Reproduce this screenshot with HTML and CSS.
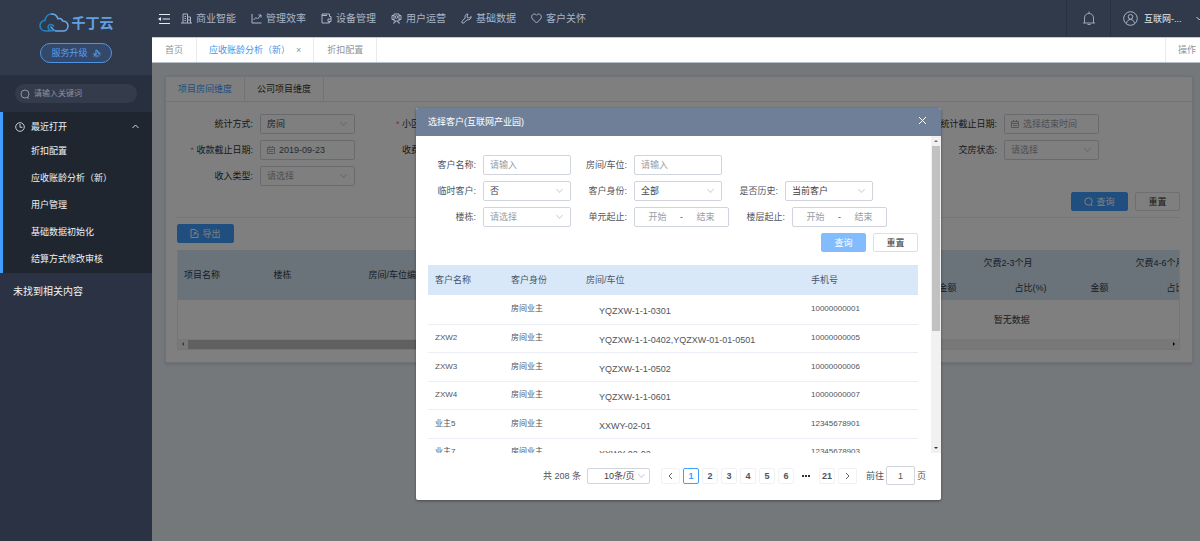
FILE: index.html
```
<!DOCTYPE html>
<html lang="zh-CN">
<head>
    <meta charset="UTF-8">
    <meta name="viewport" content="width=device-width, initial-scale=1.0">
    <title>千丁云</title>
    <link rel="stylesheet" href="styles.css">
</head>
<body>

    <div class="app">
        <aside class="sidebar">
            <div class="brand">
                <div class="logo">
                    <svg width="30" height="20" viewBox="0 0 30 20" fill="none" stroke-width="1.6" stroke-linecap="round">
                        <path stroke="#2385c4" d="M11 18H7C3.500 18 1 15.700 1 12.700 1 9.800 3.300 7.500 6 7.500 6.500 3.500 9.300 1 12.500 1"/>
                        <path stroke="#6aa6e8" d="M12.500 1C15.700 1 18 2.800 19 5.800 21 5.200 23 6 23.700 8 27 8.200 29 10.200 29 13 29 16 26.700 18 24 18H17C14.500 18 13.500 15.500 12 14"/>
                        <path stroke="#2385c4" d="M15 17.500C11 18.500 8.500 16 9.200 13.300 10 11 13.500 10.800 14.500 13"/>
                    </svg>
                    <span>千丁云</span>
                </div>
                <button class="upgrade">服务升级
                    <svg width="9" height="9" viewBox="0 0 9 9" fill="none" stroke="#559ef0"><path d="M4 8.500V5H1M4 5L1.500 7.500M4 5V1L6 2M6 2V4H8.500M6 4L8.500 6M6 6V8"/></svg>
                </button>
            </div>
            <div class="search">
                <label class="search-box">
                    <svg width="10" height="10" viewBox="0 0 10 10" fill="none" stroke="#8b94a5"><circle cx="5" cy="5" r="4"/><path d="M7 8.500L9 9.500"/></svg>
                    <input type="text" placeholder="请输入关键词" aria-label="请输入关键词">
                </label>
            </div>
            <nav class="recent">
                <button class="recent-title">
                    <svg width="10" height="10" viewBox="0 0 10 10" fill="none" stroke="#c8ced8"><circle cx="5" cy="5" r="4.300"/><path d="M5 2V5.300H7.500"/></svg>
                    <span>最近打开</span>
                    <svg width="7" height="5" viewBox="0 0 7 5" fill="none" stroke="#d5dae2"><path d="M.5 4L3.500 1L6.500 4"/></svg>
                </button>
                <a href="#">折扣配置</a>
                <a href="#">应收账龄分析（新）</a>
                <a href="#">用户管理</a>
                <a href="#">基础数据初始化</a>
                <a href="#">结算方式修改审核</a>
            </nav>
            <p class="no-result">未找到相关内容</p>
        </aside>

        <div class="main">
            <header class="header">
                <button class="fold" aria-label="menu">
                    <svg width="13" height="12" viewBox="0 0 13 12" fill="none" stroke="#e4e8ef"><path d="M1 1.500H12M4.500 6H12M1 10.500H12"/><path fill="#e4e8ef" stroke="none" d="M0 6L3 4V8Z"/></svg>
                </button>
                <nav class="top-nav">
                    <a href="#">
                        <svg width="11" height="11" viewBox="0 0 11 11"><path d="M2 10V1H6.500V10M6.500 4H9.500V10M0 10H11M3.500 3.500H5M3.500 5.500H5M3.500 7.500H5M8 6V8"/></svg>
                        商业智能
                    </a>
                    <a href="#">
                        <svg width="11" height="11" viewBox="0 0 11 11"><path d="M1 1V10H10.500M2.500 7L5 4.500L6.500 6L10 2M7.500 2H10V4.500"/></svg>
                        管理效率
                    </a>
                    <a href="#">
                        <svg width="11" height="11" viewBox="0 0 11 11"><path d="M8.500 3.500V1H1V10H8.500V8.500M1 2.500H6M8.500 3.500H10V8.500H7V6H10"/></svg>
                        设备管理
                    </a>
                    <a href="#">
                        <svg width="11" height="11" viewBox="0 0 11 11"><path d="M3 1H8V8H3ZM3 2.500H1V6.500H3M8 2.500H10V6.500H8M2 10H3.500L4.500 8M9 10H7.500L6.500 8"/><circle cx="5.500" cy="4" r="1.300"/></svg>
                        用户运营
                    </a>
                    <a href="#">
                        <svg width="11" height="11" viewBox="0 0 11 11"><path d="M7 1C4.500 1 3.500 3 4.200 5L1 8.300V10H2.800L6 6.800C8 7.500 10.300 6 10.200 3.500L8.200 5L6.300 4.700L6 3Z"/></svg>
                        基础数据
                    </a>
                    <a href="#">
                        <svg width="11" height="11" viewBox="0 0 11 11"><path d="M5.500 10L1.500 6C-.5 3.500 1.500 1 3.300 1 4.300 1 5 1.500 5.500 2.300 6 1.500 6.700 1 7.700 1 9.500 1 11.500 3.500 9.500 6Z"/></svg>
                        客户关怀
                    </a>
                </nav>
                <button class="bell" aria-label="notice">
                    <svg width="14" height="15" viewBox="0 0 14 15" fill="none" stroke="#9aa4b5"><path d="M1 12H13M2.500 12V7C2.500 4 4.500 2.500 7 2.500S11.500 4 11.500 7V12M7 .5V2.500M5.500 13.500H8.500"/></svg>
                </button>
                <button class="user">
                    <svg width="15" height="15" viewBox="0 0 15 15" fill="none" stroke="#a9b2c1"><circle cx="7.500" cy="7.500" r="6.800"/><circle cx="7.500" cy="5.800" r="2.300"/><path d="M3.500 12.500C4 9.500 5.500 8.500 7.500 8.500S11 9.500 11.500 12.500"/></svg>
                    <span>互联网-...</span>
                    <svg width="7" height="5" viewBox="0 0 7 5" fill="none" stroke="#d5dae2"><path d="M.5 1L3.500 4L6.500 1"/></svg>
                </button>
            </header>

            <nav class="page-tabs">
                <a href="#">首页</a>
                <a href="#" class="active">应收账龄分析（新）<span class="close">×</span></a>
                <a href="#" class="last">折扣配置</a>
                <a href="#" class="operate">操作</a>
            </nav>

            <main class="content">
                <section class="card">
                    <div class="card-tabs">
                        <button class="active">项目房间维度</button>
                        <button>公司项目维度</button>
                    </div>
                    <div class="card-body">
                        <form class="filter">
                            <div class="item">
                                <label for="mode">统计方式:</label>
                                <div class="select"><select id="mode"><option>房间</option></select></div>
                            </div>
                            <div class="item required">
                                <span class="label short">小区</span>
                            </div>
                            <div class="item fifth">
                                <label for="endDate">统计截止日期:</label>
                                <div class="date">
                                    <svg width="8" height="8" viewBox="0 0 8 8"><path d="M.5 1.500H7.500V7.500H.5ZM.5 3.500H7.500M2.500 0V2M5.500 0V2M2 5.500H6"/></svg>
                                    <input type="text" id="endDate" placeholder="选择结束时间">
                                </div>
                            </div>
                            <div class="item required">
                                <label for="payDate">收款截止日期:</label>
                                <div class="date">
                                    <svg width="8" height="8" viewBox="0 0 8 8"><path d="M.5 1.500H7.500V7.500H.5ZM.5 3.500H7.500M2.500 0V2M5.500 0V2M2 5.500H6"/></svg>
                                    <input type="text" id="payDate" value="2019-09-23">
                                </div>
                            </div>
                            <div class="item">
                                <span class="label short">收费</span>
                            </div>
                            <div class="item fifth">
                                <label for="state">交房状态:</label>
                                <div class="select empty"><select id="state"><option>请选择</option></select></div>
                            </div>
                            <div class="item">
                                <label for="income">收入类型:</label>
                                <div class="select empty"><select id="income"><option>请选择</option></select></div>
                            </div>
                        </form>
                        <div class="buttons">
                            <button class="btn primary wide">
                                <svg width="9" height="9" viewBox="0 0 9 9" fill="none" stroke="#fff"><circle cx="4.500" cy="4.500" r="3.700"/><path d="M6 7.500L8.500 8.500"/></svg>
                                查询
                            </button>
                            <button class="btn">重置</button>
                        </div>
                        <div class="export">
                            <button class="btn primary wide">
                                <svg width="9" height="9" viewBox="0 0 9 9" fill="none" stroke="#fff"><path d="M5 .5H1V8.500H8V4M5 .5L8 3M3 6.500L6 3.500M4 3.500H6V5.500"/></svg>
                                导出
                            </button>
                        </div>
                        <div class="report">
                            <table>
                                <colgroup>
                                    <col class="w89"><col class="w95"><col class="w114"><col class="w456">
                                    <col class="w76"><col class="w76"><col class="w76"><col class="w76"><col>
                                </colgroup>
                                <thead>
                                    <tr>
                                        <th rowspan="2">项目名称</th>
                                        <th rowspan="2">楼栋</th>
                                        <th rowspan="2">房间/车位编号</th>
                                        <th rowspan="2"></th>
                                        <th colspan="2" class="group">欠费2-3个月</th>
                                        <th colspan="2" class="group">欠费4-6个月</th>
                                        <th rowspan="2"></th>
                                    </tr>
                                    <tr>
                                        <th>金额</th>
                                        <th>占比(%)</th>
                                        <th>金额</th>
                                        <th>占比(%)</th>
                                    </tr>
                                </thead>
                                <tbody>
                                    <tr><td colspan="9">暂无数据</td></tr>
                                </tbody>
                            </table>
                            <div class="hbar">
                                <span class="arrow left"></span>
                                <div class="track"><div class="thumb"></div></div>
                                <span class="arrow right"></span>
                            </div>
                        </div>
                    </div>
                </section>

                <div class="mask">
                    <div class="dialog" role="dialog" aria-labelledby="dialogTitle">
                        <div class="dialog-header">
                            <h2 id="dialogTitle">选择客户(互联网产业园)</h2>
                            <button aria-label="close">
                                <svg width="9" height="9" viewBox="0 0 9 9" fill="none" stroke="#fff"><path d="M1 1L8 8M8 1L1 8"/></svg>
                            </button>
                        </div>
                        <div class="dialog-body">
                            <div class="dialog-content">
                                <form class="query">
                                    <div class="row">
                                        <div class="field">
                                            <label for="name">客户名称:</label>
                                            <input type="text" id="name" placeholder="请输入">
                                        </div>
                                        <div class="field">
                                            <label for="room">房间/车位:</label>
                                            <input type="text" id="room" placeholder="请输入">
                                        </div>
                                    </div>
                                    <div class="row">
                                        <div class="field">
                                            <label for="temp">临时客户:</label>
                                            <div class="select"><select id="temp"><option>否</option></select></div>
                                        </div>
                                        <div class="field">
                                            <label for="identity">客户身份:</label>
                                            <div class="select"><select id="identity"><option>全部</option></select></div>
                                        </div>
                                        <div class="field">
                                            <label for="history">是否历史:</label>
                                            <div class="select"><select id="history"><option>当前客户</option></select></div>
                                        </div>
                                    </div>
                                    <div class="row">
                                        <div class="field">
                                            <label for="building">楼栋:</label>
                                            <div class="select empty"><select id="building"><option>请选择</option></select></div>
                                        </div>
                                        <div class="field">
                                            <label for="unit">单元起止:</label>
                                            <div class="range">
                                                <input type="text" id="unit" placeholder="开始"><span>-</span><input type="text" placeholder="结束" aria-label="单元结束">
                                            </div>
                                        </div>
                                        <div class="field">
                                            <label for="floor">楼层起止:</label>
                                            <div class="range">
                                                <input type="text" id="floor" placeholder="开始"><span>-</span><input type="text" placeholder="结束" aria-label="楼层结束">
                                            </div>
                                        </div>
                                    </div>
                                    <div class="buttons">
                                        <button type="button" class="btn light">查询</button>
                                        <button type="button" class="btn">重置</button>
                                    </div>
                                </form>
                                <table class="customers">
                                    <colgroup><col class="w76"><col class="w75"><col><col class="w114"></colgroup>
                                    <thead>
                                        <tr>
                                            <th>客户名称</th>
                                            <th>客户身份</th>
                                            <th>房间/车位</th>
                                            <th>手机号</th>
                                        </tr>
                                    </thead>
                                    <tbody>
                                        <tr><td></td><td>房间业主</td><td class="room">YQZXW-1-1-0301</td><td>10000000001</td></tr>
                                        <tr><td>ZXW2</td><td>房间业主</td><td class="room">YQZXW-1-1-0402,YQZXW-01-01-0501</td><td>10000000005</td></tr>
                                        <tr><td>ZXW3</td><td>房间业主</td><td class="room">YQZXW-1-1-0502</td><td>10000000006</td></tr>
                                        <tr><td>ZXW4</td><td>房间业主</td><td class="room">YQZXW-1-1-0601</td><td>10000000007</td></tr>
                                        <tr><td>业主5</td><td>房间业主</td><td class="room">XXWY-02-01</td><td>12345678901</td></tr>
                                        <tr><td>业主7</td><td>房间业主</td><td class="room">XXWY-02-02</td><td>12345678903</td></tr>
                                    </tbody>
                                </table>
                            </div>
                            <div class="vbar">
                                <span class="arrow up"></span>
                                <div class="track"><div class="thumb"></div></div>
                                <span class="arrow down"></span>
                            </div>
                        </div>
                        <div class="pagination">
                            <span class="total">共 208 条</span>
                            <div class="select size"><select aria-label="每页条数"><option>10条/页</option></select></div>
                            <div class="pages">
                                <button class="step" aria-label="prev"><svg width="5" height="8" viewBox="0 0 5 8" fill="none" stroke="#606266"><path d="M4 1L1 4L4 7"/></svg></button>
                                <button class="active">1</button>
                                <button>2</button>
                                <button>3</button>
                                <button>4</button>
                                <button>5</button>
                                <button>6</button>
                                <button class="more" aria-label="more"><svg width="8" height="2" viewBox="0 0 8 2" fill="#303133"><path d="M0 0H2V2H0ZM3 0H5V2H3ZM6 0H8V2H6Z"/></svg></button>
                                <button>21</button>
                                <button class="step" aria-label="next"><svg width="5" height="8" viewBox="0 0 5 8" fill="none" stroke="#606266"><path d="M1 1L4 4L1 7"/></svg></button>
                            </div>
                            <label class="jump">前往<input type="text" value="1">页</label>
                        </div>
                    </div>
                </div>
            </main>
        </div>
    </div>

</body>
</html>
```
FILE: styles.css
```
* {
    box-sizing: border-box;
}
body {
    margin: 0;
    font: 9px/12px "Liberation Sans", "Noto Sans CJK SC", sans-serif;
    color: #50545c;
}
button, input, select {
    margin: 0;
    padding: 0;
    border: 0;
    outline: 0;
    background: none;
    font: inherit;
    color: inherit;
    min-width: 0;
}
a {
    color: inherit;
    text-decoration: none;
}
svg {
    flex: none;
}
table {
    width: 100%;
    border-collapse: collapse;
    table-layout: fixed;
}
th {
    font-weight: normal;
    text-align: left;
}
.app {
    display: flex;
    min-height: 100vh;
    overflow: hidden;
}

/* 侧边栏 */
.sidebar {
    flex: none;
    width: 152px;
    background-color: #2b3243;
    color: #f0f2f5;
}
.brand {
    display: flex;
    flex-direction: column;
    align-items: center;
    gap: 10px;
    height: 75px;
    padding-top: 12px;
    background-color: #303a4b;
}
.logo {
    display: flex;
    align-items: center;
    gap: 3px;
    height: 21px;
    font-size: 14px;
    font-weight: bold;
    color: #62a0e4;
}
.upgrade {
    display: flex;
    align-items: center;
    justify-content: center;
    gap: 4px;
    width: 72px;
    height: 20px;
    border: 1px solid #4f93e4;
    border-radius: 10px;
    background-color: #34496a;
    color: #559ef0;
}
.search {
    padding: 9px 15px;
    background-color: #283040;
}
.search-box {
    display: flex;
    align-items: center;
    gap: 4px;
    height: 19px;
    padding-left: 5px;
    border-radius: 10px;
    background-color: #343c4c;
}
.search-box input {
    flex: 1;
    font-size: 8px;
}
.search-box input::placeholder {
    color: #8b94a5;
}
.recent {
    border-left: 3px solid #409eff;
    background-color: #1f2630;
}
.recent-title {
    display: flex;
    align-items: center;
    gap: 6px;
    width: 100%;
    height: 26px;
    padding: 3px 13px 0 12px;
}
.recent-title span {
    flex: 1;
    text-align: left;
}
.recent a {
    display: block;
    padding-left: 28px;
    line-height: 27px;
}
.no-result {
    margin: 0;
    padding: 12px 13px;
    font-size: 10px;
    line-height: 14px;
}

/* 顶部 */
.main {
    display: flex;
    flex-direction: column;
    flex: 1;
    min-width: 0;
}
.header {
    display: flex;
    align-items: center;
    height: 37px;
    padding-left: 6px;
    background-color: #303a4b;
    color: #a9b5c8;
}
.fold, .bell {
    display: flex;
    align-items: center;
    justify-content: center;
}
.top-nav {
    display: flex;
    flex: 1;
    gap: 15px;
    padding-left: 10px;
    font-size: 10px;
    line-height: 14px;
}
.top-nav a {
    display: flex;
    align-items: center;
    gap: 4px;
    white-space: nowrap;
}
.top-nav svg {
    fill: none;
    stroke: #a9b5c8;
}
.bell {
    width: 45px;
    height: 100%;
    border: solid #2a3241;
    border-width: 0 1px;
}
.user {
    display: flex;
    align-items: center;
    gap: 6px;
    width: 89px;
    padding-left: 12px;
    color: #e4e8ef;
    white-space: nowrap;
}
.user span {
    flex: none;
    width: 46px;
    text-align: left;
}
.page-tabs {
    display: flex;
    height: 26px;
    border-top: 1px solid #c6ccd6;
    border-bottom: 1px solid #b9bfc8;
    background-color: #fff;
    color: #8f9399;
    line-height: 24px;
}
.page-tabs a {
    padding: 0 13px;
    border-right: 1px solid #e8eaee;
    white-space: nowrap;
}
.page-tabs a.active {
    padding: 0 12px;
    color: #4797e8;
}
.page-tabs .close {
    padding-left: 6px;
    color: #8f9399;
}
.page-tabs .last {
    margin-right: auto;
}
.page-tabs .operate {
    width: 35px;
    padding: 0 12px;
    border-right: 0;
    border-left: 1px solid #e8eaee;
    overflow: hidden;
}

/* 内容 */
.content {
    position: relative;
    flex: 1;
    padding: 13px 7px 13px 13px;
    background-color: #e9f0f6;
}
.card {
    border: 1px solid #e0e4ea;
    border-radius: 2px;
    background-color: #fff;
    box-shadow: 0 1px 3px #c4ccd4;
}
.card-tabs {
    display: flex;
    border-bottom: 1px solid #e4e7ed;
}
.card-tabs button {
    height: 24px;
    padding: 0 12px;
    border-right: 1px solid #e4e7ed;
    color: #303133;
}
.card-tabs button.active {
    margin-bottom: -1px;
    background-color: #fff;
    color: #409eff;
}
.card-body {
    padding: 12px 12px 12px 11px;
}
.filter {
    display: grid;
    grid-template-columns: repeat(5, 186px);
    gap: 6px 0;
}
.item {
    display: flex;
    align-items: center;
    height: 20px;
}
.item label, .item .label {
    flex: none;
    width: 76px;
    margin-right: 7px;
    text-align: right;
    white-space: nowrap;
    color: #303133;
}
.item .short {
    width: 57px;
}
.item.fifth {
    grid-column: 5;
}
.item.required label::before, .item.required .label::before {
    content: "* ";
    color: #f56c6c;
}
.select, .date, .field > input, .range {
    display: flex;
    align-items: center;
    height: 20px;
    border: 1px solid #d0d4dc;
    border-radius: 2px;
    background-color: #fff;
}
.select select {
    appearance: none;
    flex: 1;
    height: 100%;
    padding-left: 6px;
    color: #3c4048;
}
.select::after {
    content: "";
    width: 4px;
    height: 4px;
    margin: 0 8px 3px 0;
    border: solid #d4d7de;
    border-width: 0 1px 1px 0;
    transform: rotate(45deg);
}
.select.empty select {
    color: #999da5;
}
input::placeholder {
    color: #999da5;
}
.item .select, .item .date {
    width: 95px;
}
.date {
    gap: 4px;
    padding-left: 6px;
}
.date svg {
    fill: none;
    stroke: #a8acb4;
}
.date input {
    flex: 1;
}
.buttons {
    display: flex;
    justify-content: flex-end;
    gap: 7px;
}
.btn {
    display: flex;
    align-items: center;
    justify-content: center;
    gap: 3px;
    width: 45px;
    height: 19px;
    border: 1px solid #dcdfe6;
    border-radius: 2px;
    background-color: #fff;
    color: #303133;
}
.btn.wide {
    width: 57px;
}
.btn.primary {
    border-color: #409eff;
    background-color: #409eff;
    color: #fff;
}
.btn.light {
    border-color: #82bcff;
    background-color: #82bcff;
    color: #fff;
}
.card-body > .buttons {
    padding: 6px 0;
    border-bottom: 1px solid #e8eaee;
}
.export {
    padding: 6px 0 7px;
}
.report {
    border: 1px solid #e8eaee;
    border-top: 0;
    overflow: hidden;
}
.report table {
    width: 1668px;
    color: #303c4c;
}
.report th {
    height: 25px;
    padding: 0 6px;
    border-right: 1px solid #d4e2ee;
    background-color: #d5e6f5;
    white-space: nowrap;
}
.report .group {
    text-align: center;
}
.report td {
    height: 39px;
    padding: 0;
    text-align: center;
}
.w75 { width: 75px; }
.w76 { width: 76px; }
.w89 { width: 89px; }
.w95 { width: 95px; }
.w114 { width: 114px; }
.w456 { width: 456px; }

/* 滚动条 */
.hbar, .vbar {
    display: flex;
    align-items: center;
    background-color: #f1f1f1;
}
.hbar {
    height: 10px;
}
.vbar {
    flex: none;
    flex-direction: column;
    width: 10px;
}
.track {
    flex: 1;
}
.hbar .thumb {
    width: 60%;
    height: 9px;
    background-color: #c1c1c1;
}
.vbar .thumb {
    width: 8px;
    height: 185px;
    background-color: #c1c1c1;
}
.arrow {
    margin: 4px;
    border: 2px solid transparent;
}
.arrow.left {
    border-left: 0;
    border-right-color: #707070;
}
.arrow.right {
    border-right: 0;
    border-left-color: #000;
}
.arrow.up {
    border-top: 0;
    border-bottom-color: #707070;
}
.arrow.down {
    border-bottom: 0;
    border-top-color: #303030;
}

/* 弹窗 */
.mask {
    position: absolute;
    inset: 0;
    display: flex;
    align-items: flex-start;
    justify-content: center;
    padding: 45px 0 0 5px;
    background-color: rgba(0, 0, 0, .5);
}
.dialog {
    width: 525px;
    max-width: 100%;
    border-radius: 2px;
    background-color: #fff;
    box-shadow: 0 1px 3px rgba(0, 0, 0, .4);
    overflow: hidden;
}
.dialog-header {
    display: flex;
    align-items: center;
    justify-content: space-between;
    height: 28px;
    padding: 0 14px 0 12px;
    background-color: #6f7f98;
    color: #fff;
}
.dialog-header h2 {
    margin: 0;
    font-size: 9px;
    font-weight: normal;
}
.dialog-header button {
    display: flex;
    margin-bottom: 4px;
}
.dialog-body {
    display: flex;
    height: 317px;
}
.dialog-content {
    flex: 1;
    padding: 19px 13px 0 12px;
    overflow: hidden;
}
.query {
    display: flex;
    flex-direction: column;
    gap: 6px;
    margin-bottom: 13px;
}
.row {
    display: flex;
    gap: 8px;
}
.field {
    display: flex;
    align-items: center;
}
.field label {
    width: 48px;
    margin-right: 7px;
    text-align: right;
    white-space: nowrap;
}
.field > input, .field .select {
    width: 88px;
}
.field > input {
    padding-left: 6px;
}
.range {
    width: 95px;
}
.range input {
    flex: 1;
    text-align: center;
}
.customers th {
    height: 30px;
    padding: 0 7px;
    background-color: #d9e8f8;
    color: #46556a;
}
.customers td {
    height: 28px;
    padding: 0 7px;
    border-bottom: 1px solid #ebeef5;
    font-size: 8px;
}
.customers tr:nth-child(odd) td {
    height: 29px;
}
.customers td.room {
    padding: 4px 0 0 20px;
    font-size: 9px;
    white-space: nowrap;
}
.pagination {
    display: flex;
    align-items: center;
    justify-content: flex-end;
    height: 47px;
    padding: 0 15px 2px 0;
}
.size {
    width: 63px;
    height: 16px;
    margin: 0 11px 0 6px;
}
.size select {
    padding-left: 16px;
}
.size::after {
    margin-right: 5px;
}
.pages {
    display: flex;
    gap: 3px;
    margin-right: 9px;
}
.pages button {
    display: flex;
    align-items: center;
    justify-content: center;
    width: 16px;
    height: 16px;
    border: 1px solid #f0f2f5;
    border-radius: 2px;
    font-weight: bold;
}
.pages .step {
    width: 19px;
}
.pages .active {
    border-color: #409eff;
    color: #409eff;
}
.pages .more {
    width: 19px;
    border-color: transparent;
}
.jump {
    display: flex;
    align-items: center;
    gap: 2px;
}
.jump input {
    width: 29px;
    height: 19px;
    border: 1px solid #d0d4dc;
    border-radius: 2px;
    text-align: center;
}
```
